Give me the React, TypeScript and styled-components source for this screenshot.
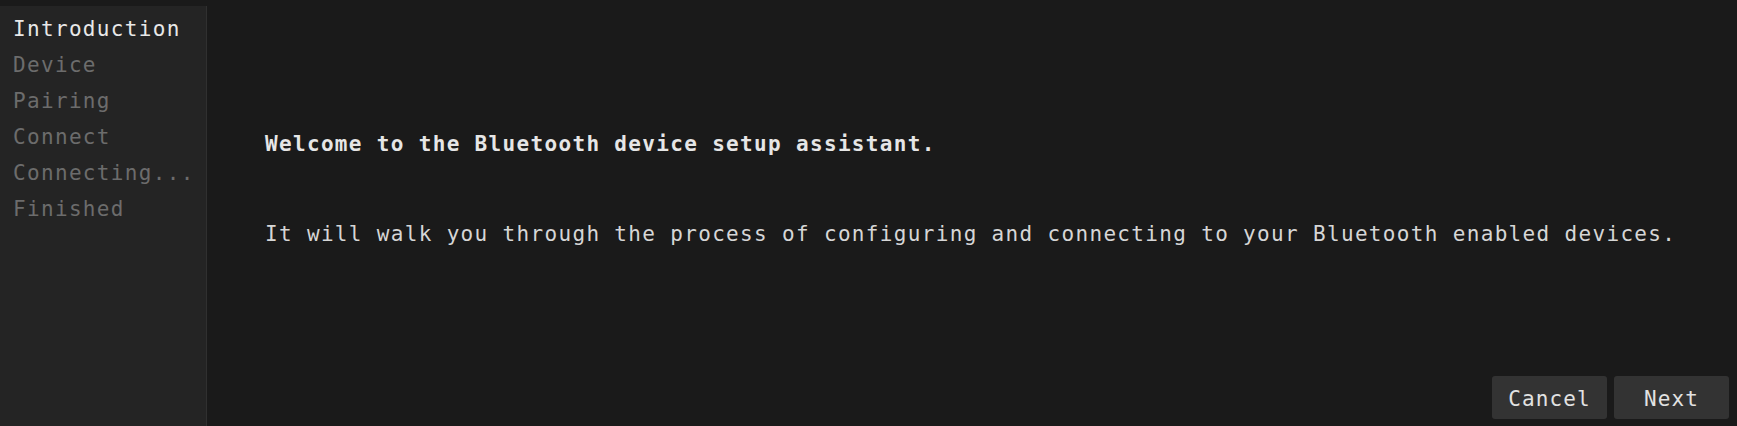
import React from "react";
import styled, { createGlobalStyle } from "styled-components";

const Global = createGlobalStyle`
  html, body { margin: 0; padding: 0; background: #1a1a1a; }
  body { font-family: "DejaVu Sans Mono", "Liberation Mono", monospace; }
  * { box-sizing: border-box; }
`;

const Window = styled.div`
  display: flex;
  height: 426px;
  background: #1a1a1a;
  font-family: "DejaVu Sans Mono", "Liberation Mono", monospace;
  font-size: 21px;
  letter-spacing: 1.33px;
`;

const Sidebar = styled.nav`
  margin-top: 6px;
  width: 207px;
  flex: none;
  background: #242424;
  border-right: 1px solid #303030;
  padding: 5px 0 0 13px;
  display: flex;
  flex-direction: column;
`;

const Step = styled.div<{ $active?: boolean }>`
  line-height: 36px;
  height: 36px;
  white-space: nowrap;
  color: ${(p) => (p.$active ? "#e8e8e8" : "#6c6c6c")};
`;

const Main = styled.main`
  flex: 1;
  display: flex;
  flex-direction: column;
`;

const Content = styled.section`
  padding: 126px 0 0 58px;
  display: flex;
  flex-direction: column;
  gap: 54px;
`;

const Title = styled.p`
  margin: 0;
  line-height: 36px;
  font-weight: bold;
  color: #e6e6e6;
`;

const Text = styled.p`
  margin: 0;
  line-height: 36px;
  color: #d6d6d6;
`;

const Footer = styled.footer`
  margin-top: auto;
  display: flex;
  justify-content: flex-end;
  gap: 7px;
  padding: 0 8px 7px 0;
`;

const Button = styled.button`
  width: 115px;
  height: 43px;
  border: none;
  border-radius: 3px;
  background: #333333;
  color: #e2e2e2;
  font-family: inherit;
  font-size: 21px;
  letter-spacing: 1.1px;
  padding: 2px 0 0;
  cursor: pointer;
`;

const steps = ["Introduction", "Device", "Pairing", "Connect", "Connecting...", "Finished"];

export default function App() {
  return (
    <>
      <Global />
      <Window>
        <Sidebar>
          {steps.map((s, i) => (
            <Step key={s} $active={i === 0}>
              {s}
            </Step>
          ))}
        </Sidebar>
        <Main>
          <Content>
            <Title>Welcome to the Bluetooth device setup assistant.</Title>
            <Text>
              It will walk you through the process of configuring and connecting to your Bluetooth enabled devices.
            </Text>
          </Content>
          <Footer>
            <Button>Cancel</Button>
            <Button>Next</Button>
          </Footer>
        </Main>
      </Window>
    </>
  );
}
